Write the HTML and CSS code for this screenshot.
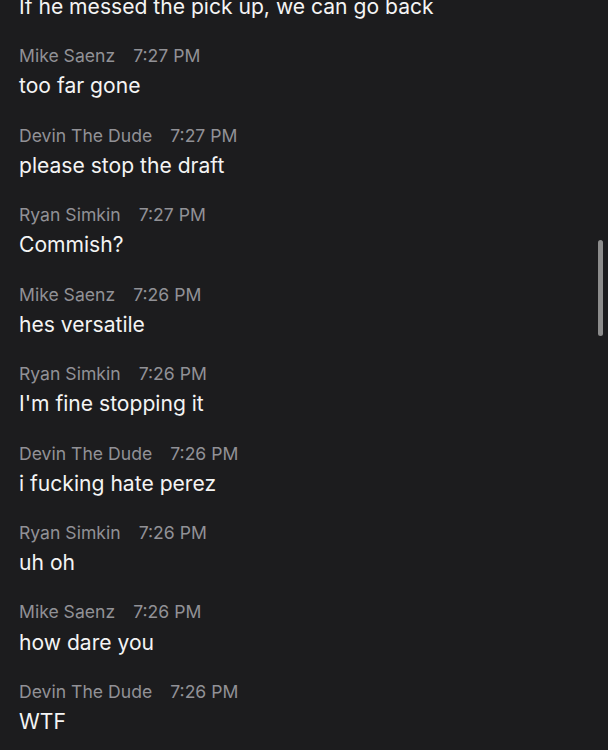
FILE: index.html
```html
<!DOCTYPE html>
<html>
<head>
<meta charset="utf-8">
<link rel="stylesheet" href="styles.css">
</head>
<body>
<div class="chat">
  <div class="msg first"><div class="text">If he messed the pick up, we can go back</div></div>
  <div class="msg"><div class="meta"><span class="name">Mike Saenz</span><span class="time">7:27 PM</span></div><div class="text">too far gone</div></div>
  <div class="msg"><div class="meta"><span class="name">Devin The Dude</span><span class="time">7:27 PM</span></div><div class="text">please stop the draft</div></div>
  <div class="msg"><div class="meta"><span class="name">Ryan Simkin</span><span class="time">7:27 PM</span></div><div class="text">Commish?</div></div>
  <div class="msg"><div class="meta"><span class="name">Mike Saenz</span><span class="time">7:26 PM</span></div><div class="text">hes versatile</div></div>
  <div class="msg"><div class="meta"><span class="name">Ryan Simkin</span><span class="time">7:26 PM</span></div><div class="text">I'm fine stopping it</div></div>
  <div class="msg"><div class="meta"><span class="name">Devin The Dude</span><span class="time">7:26 PM</span></div><div class="text">i fucking hate perez</div></div>
  <div class="msg"><div class="meta"><span class="name">Ryan Simkin</span><span class="time">7:26 PM</span></div><div class="text">uh oh</div></div>
  <div class="msg"><div class="meta"><span class="name">Mike Saenz</span><span class="time">7:26 PM</span></div><div class="text">how dare you</div></div>
  <div class="msg"><div class="meta"><span class="name">Devin The Dude</span><span class="time">7:26 PM</span></div><div class="text">WTF</div></div>
</div>
<div class="scrollbar"></div>
</body>
</html>
```
FILE: styles.css
```css
html, body {
  margin: 0;
  padding: 0;
  background: #1c1c1e;
  height: 100%;
  overflow: hidden;
}
body {
  font-family: Inter, "Noto Sans", sans-serif;
  position: relative;
}
.chat {
  display: flex;
  flex-direction: column;
  padding: 0 19px;
  margin-top: -8px;
}
.msg {
  display: flex;
  flex-direction: column;
  gap: 3.4px;
  padding-top: 22.1px;
}
.msg.first {
  padding-top: 0;
}
.meta {
  display: flex;
  gap: 18px;
  font-size: 17.6px;
  line-height: 24px;
  color: #919196;
}
.text {
  font-size: 21.1px;
  line-height: 30px;
  color: #f4f4f4;
}
.scrollbar {
  position: absolute;
  left: 598px;
  top: 240px;
  width: 5px;
  height: 96px;
  border-radius: 3px;
  background: #8c8c8c;
}
```
